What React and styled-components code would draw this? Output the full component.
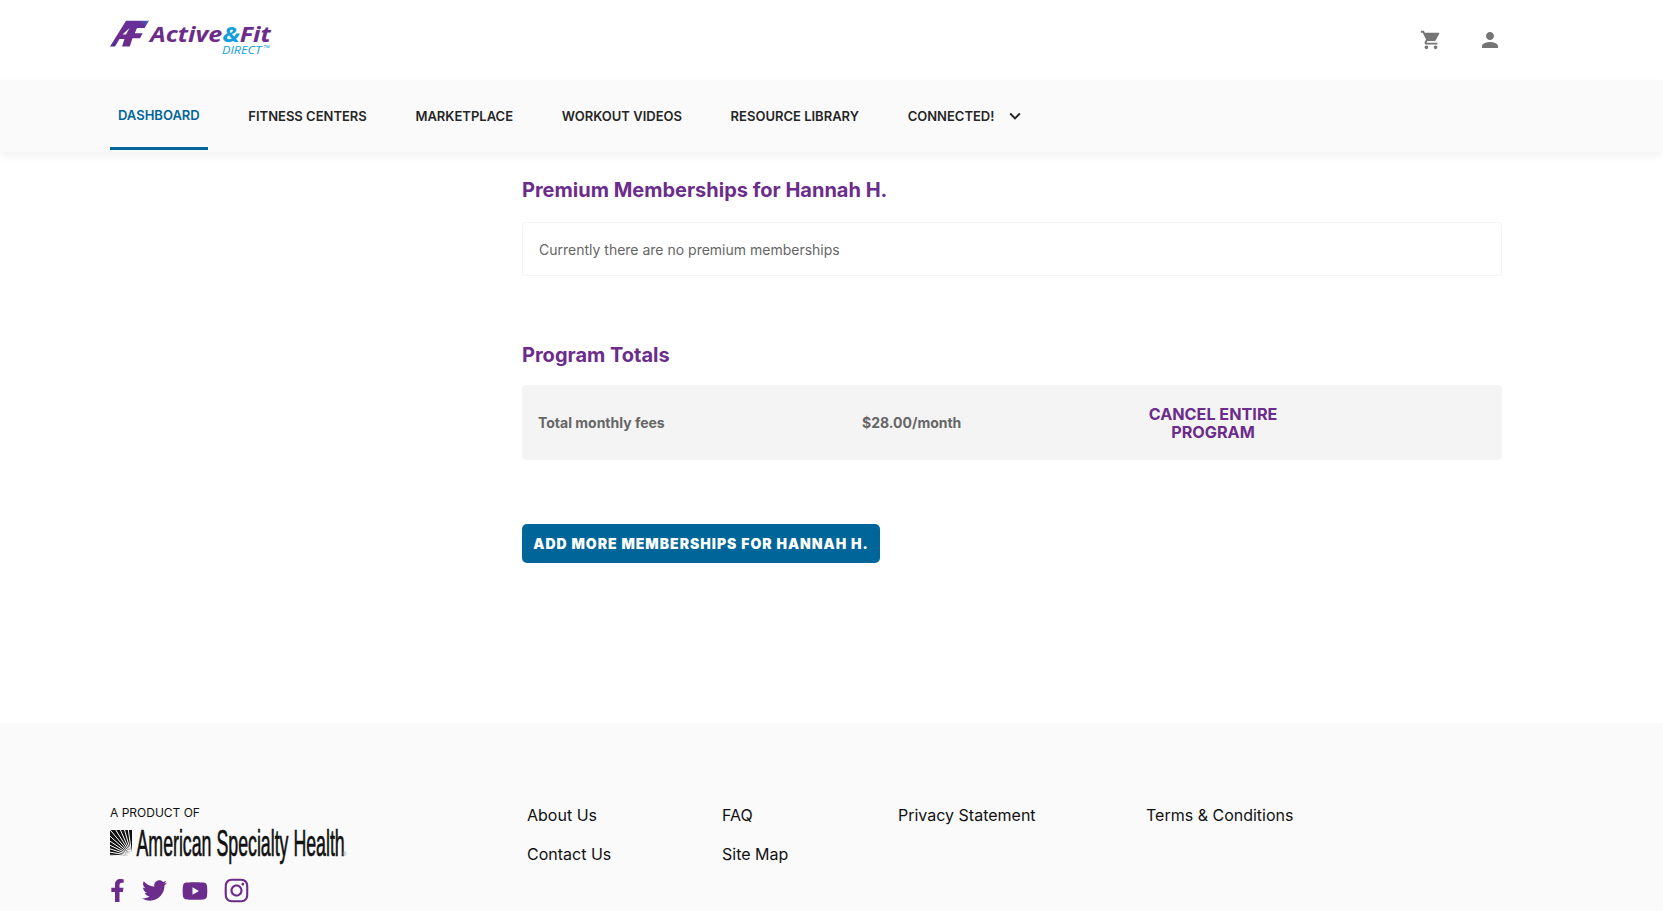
import React from "react";
import styled, { createGlobalStyle } from "styled-components";
import { MdShoppingCart, MdPerson, MdKeyboardArrowDown } from "react-icons/md";
import { FaFacebookF, FaTwitter, FaYoutube, FaInstagram } from "react-icons/fa";

const GlobalStyle = createGlobalStyle`
  html, body {
    margin: 0;
    padding: 0;
    background: #fff;
    font-family: Inter, "Liberation Sans", sans-serif;
  }
  * {
    box-sizing: border-box;
  }
`;

const Header = styled.header`
  height: 80px;
  background: #fff;
  padding: 0 161px 0 110px;
  display: flex;
  align-items: center;
  justify-content: space-between;
`;

const HeaderIcons = styled.div`
  display: flex;
  align-items: center;
  gap: 36px;
  margin-top: -1px;
  color: #757575;
  font-size: 24px;
  line-height: 0;
`;

const CartIcon = styled(MdShoppingCart)`
  font-size: 22px;
`;

const Nav = styled.nav`
  height: 72px;
  background: #fafafa;
  padding-left: 110px;
  display: flex;
  align-items: flex-start;
  gap: 32.6px;
  box-shadow: 0 4px 8px rgba(0, 0, 0, 0.05);
  position: relative;
`;

const Tab = styled.a`
  height: ${({ $active }) => ($active ? "70px" : "72px")};
  padding: ${({ $active }) => ($active ? "2px" : "0")} 8px 0;
  display: flex;
  align-items: center;
  gap: 10px;
  font-size: 13px;
  font-weight: 600;
  color: ${({ $active }) => ($active ? "#006699" : "#262626")};
  border-bottom: ${({ $active }) => ($active ? "3px solid #006699" : "0")};

  svg {
    font-size: 22px;
    color: #262626;
  }
`;

const Main = styled.main`
  padding: 26px 161px 160px 522px;
`;

const Heading = styled.h2`
  margin: ${({ $top }) => $top || 0}px 0 0;
  font-size: 20px;
  line-height: 24px;
  font-weight: 700;
  color: #6b2c8b;
`;

const EmptyCard = styled.div`
  margin-top: 20px;
  height: 54px;
  padding: 0 16px;
  display: flex;
  align-items: center;
  border: 1px solid #f4f4f4;
  border-radius: 4px;
  font-size: 14px;
  color: #666;
`;

const TotalsRow = styled.div`
  margin-top: 18px;
  height: 75px;
  padding-left: 16px;
  display: grid;
  grid-template-columns: 324px 268px 166px;
  align-items: center;
  background: #f4f4f4;
  border-radius: 4px;
  font-size: 14px;
  font-weight: 700;
  color: #666;
`;

const CancelLink = styled.a`
  font-size: 16.2px;
  line-height: 18px;
  font-weight: 700;
  text-align: center;
  color: #6b2c8b;
`;

const AddButton = styled.button`
  display: block;
  margin-top: 64px;
  width: 358px;
  height: 39px;
  padding: 0;
  border: 0;
  border-radius: 5px;
  background: #006699;
  color: #fff;
  font-family: inherit;
  font-size: 14px;
  font-weight: 900;
  letter-spacing: 1px;
`;

const Footer = styled.footer`
  height: 188px;
  background: #fafafa;
  padding: 80px 0 0 110px;
  display: flex;
`;

const Brand = styled.div`
  width: 417px;
  padding-top: 2px;
`;

const ProductOf = styled.div`
  font-size: 12px;
  line-height: 16px;
  color: #111;
`;

const AshLogo = styled.svg`
  display: block;
`;

const Socials = styled.div`
  margin: 12px 0 0 -4px;
  display: flex;
  align-items: center;
  color: #6b2c8b;
  line-height: 0;
`;

const Social = styled.span`
  width: ${({ $w }) => $w}px;
  font-size: ${({ $size }) => $size}px;
`;

const Links = styled.div`
  display: grid;
  grid-template-columns: 195px 176px 248px auto;
  grid-auto-rows: 24px;
  row-gap: 15px;
  justify-content: start;
  font-size: 16px;
  line-height: 24px;
  color: #111;
`;

const ActiveFitLogo = () => (
  <svg width="166" height="42" viewBox="0 0 166 42" aria-label="Active&Fit Direct">
    <defs>
      <linearGradient id="afMark" x1="0" y1="1" x2="1" y2="0">
        <stop offset="0" stopColor="#4f2f92" />
        <stop offset="0.35" stopColor="#6f2c8e" />
        <stop offset="0.85" stopColor="#63329a" />
        <stop offset="1" stopColor="#3a78c4" />
      </linearGradient>
    </defs>
    <path
      fill="url(#afMark)"
      fillRule="evenodd"
      d="M0 27.5 16 1.7H39L34.5 9H27L24.8 14.3H32.7L30 19.3H22.5L19.8 27.5H12L14.5 20H9.5L5 27.5ZM12.5 15.5H16L19.5 9Z"
    />
    <g transform="translate(40 22.7) scale(1.19 1)">
      <text fontFamily="Open Sans, sans-serif" fontSize="21" fontWeight="700" fontStyle="italic">
        <tspan fill="#6b2c8b">Active</tspan>
        <tspan fill="#139fdd">&amp;</tspan>
        <tspan fill="#6b2c8b">Fit</tspan>
      </text>
    </g>
    <g transform="translate(112 34.5) scale(1.15 1)">
      <text fill="#139fdd" fontFamily="Open Sans, sans-serif" fontSize="11" fontStyle="italic">
        DIRECT
      </text>
    </g>
    <text x="153" y="31" fill="#139fdd" fontFamily="Liberation Sans, sans-serif" fontSize="7">
      ™
    </text>
  </svg>
);

const rays = [178, 170, 162, 154, 146, 138, 130, 122, 114, 106, 98];

const AmericanSpecialtyLogo = () => (
  <AshLogo width="240" height="44" viewBox="0 0 240 44" aria-label="American Specialty Health">
    <defs>
      <clipPath id="ashMark">
        <rect x="0" y="9" width="22" height="26" />
      </clipPath>
    </defs>
    <g clipPath="url(#ashMark)">
      <rect x="0" y="9" width="22" height="26" fill="#111" />
      {rays.map((angle) => {
        const rad = (angle * Math.PI) / 180;
        return (
          <line
            key={angle}
            x1="22"
            y1="35"
            x2={22 + Math.cos(rad) * 40}
            y2={35 - Math.sin(rad) * 40}
            stroke="#fff"
            strokeWidth="1"
          />
        );
      })}
    </g>
    <g transform="translate(26.5 35) scale(0.48 1)">
      <text fill="#111" stroke="#111" strokeWidth="0.7" fontFamily="Liberation Sans, sans-serif" fontSize="37">
        American Specialty Health
      </text>
    </g>
    <text x="232" y="35" fill="#7a8aa0" fontFamily="Liberation Sans, sans-serif" fontSize="6">
      ®
    </text>
  </AshLogo>
);

export default function App() {
  return (
    <>
      <GlobalStyle />
      <Header>
        <ActiveFitLogo />
        <HeaderIcons>
          <CartIcon />
          <MdPerson />
        </HeaderIcons>
      </Header>
      <Nav>
        <Tab $active>DASHBOARD</Tab>
        <Tab>FITNESS CENTERS</Tab>
        <Tab>MARKETPLACE</Tab>
        <Tab>WORKOUT VIDEOS</Tab>
        <Tab>RESOURCE LIBRARY</Tab>
        <Tab>
          CONNECTED!
          <MdKeyboardArrowDown />
        </Tab>
      </Nav>
      <Main>
        <Heading>Premium Memberships for Hannah H.</Heading>
        <EmptyCard>Currently there are no premium memberships</EmptyCard>
        <Heading $top={67}>Program Totals</Heading>
        <TotalsRow>
          <span>Total monthly fees</span>
          <span>$28.00/month</span>
          <CancelLink>CANCEL ENTIRE PROGRAM</CancelLink>
        </TotalsRow>
        <AddButton>ADD MORE MEMBERSHIPS FOR HANNAH H.</AddButton>
      </Main>
      <Footer>
        <Brand>
          <ProductOf>A PRODUCT OF</ProductOf>
          <AmericanSpecialtyLogo />
          <Socials>
            <Social $w={36} $size={23}><FaFacebookF /></Social>
            <Social $w={40} $size={25}><FaTwitter /></Social>
            <Social $w={41} $size={26}><FaYoutube /></Social>
            <Social $w={27} $size={27}><FaInstagram /></Social>
          </Socials>
        </Brand>
        <Links>
          <span>About Us</span>
          <span>FAQ</span>
          <span>Privacy Statement</span>
          <span>Terms &amp; Conditions</span>
          <span>Contact Us</span>
          <span>Site Map</span>
        </Links>
      </Footer>
    </>
  );
}
